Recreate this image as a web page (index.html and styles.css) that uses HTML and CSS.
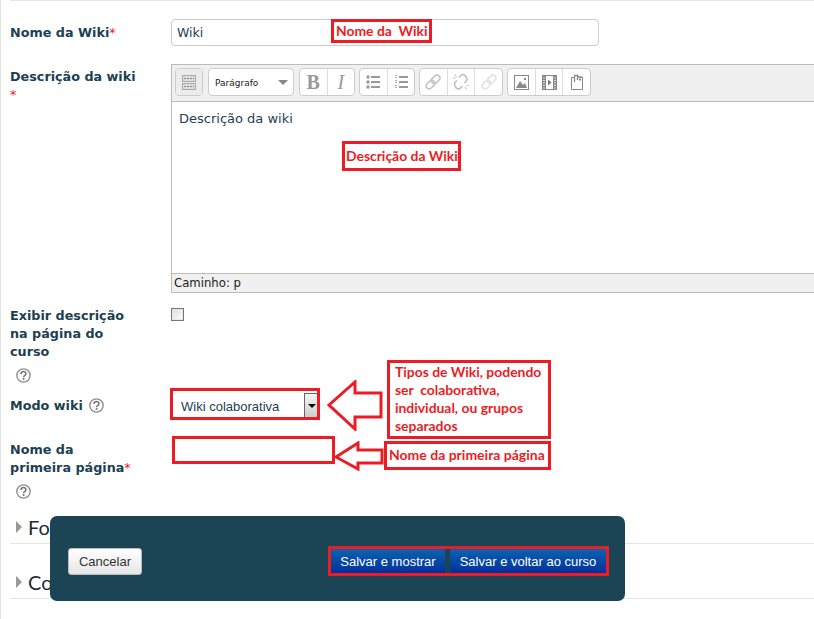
FILE: index.html
```html
<!DOCTYPE html>
<html lang="pt">
<head>
<meta charset="utf-8">
<title>Wiki</title>
<link rel="stylesheet" href="styles.css">
</head>
<body>
<svg class="defs" width="0" height="0" aria-hidden="true">
  <symbol id="help" viewBox="0 0 14 14">
    <circle cx="7" cy="7" r="6.200" fill="#fff" stroke="#8f8f8f" stroke-width="1.300"/>
    <path d="M4.700 5.600c0-3 4.600-3 4.600-.2 0 1.700-2.300 1.600-2.300 3.200" fill="none" stroke="#777" stroke-width="1.500"/>
    <rect x="6.200" y="9.400" width="1.700" height="1.700" fill="#777"/>
  </symbol>
  <symbol id="link" viewBox="0 0 18 18">
    <g fill="none" stroke="currentColor" stroke-width="1.700" transform="rotate(-45 9 9)">
      <rect x="0.500" y="6" width="9.500" height="6" rx="3"/>
      <rect x="8" y="6" width="9.500" height="6" rx="3"/>
    </g>
  </symbol>
</svg>
<main class="page">
  <form class="form">
    <div class="row row-name">
      <label class="label">Nome da Wiki<span class="req">*</span></label>
      <div class="control"><input class="text name-input" type="text" value="Wiki"></div>
    </div>
    <div class="row row-desc">
      <label class="label">Descrição da wiki <span class="req block">*</span></label>
      <div class="control">
        <div class="editor">
          <div class="toolbar">
            <span class="group group-1"><span class="tool single">
              <svg width="14" height="15" viewBox="0 0 14 15"><g fill="#ddd" stroke="#aaa"><rect x=".5" y=".5" width="13" height="6"/><rect x=".5" y="8.500" width="13" height="6"/></g><path d="M2 3.500h10M2 11.500h10" stroke="#888" stroke-dasharray="2 1"/></svg>
            </span></span>
            <span class="format">Parágrafo<i class="caret"></i></span>
            <span class="group group-2">
              <span class="tool serif-b">B</span><span class="tool serif-i">I</span>
            </span>
            <span class="group group-2">
              <span class="tool"><svg width="14" height="14" viewBox="0 0 14 14"><g fill="#999"><circle cx="2" cy="2" r="1.700"/><circle cx="2" cy="7" r="1.700"/><circle cx="2" cy="12" r="1.700"/><rect x="5" y="1" width="9" height="2"/><rect x="5" y="6" width="9" height="2"/><rect x="5" y="11" width="9" height="2"/></g></svg></span>
              <span class="tool"><svg width="14" height="14" viewBox="0 0 14 14"><g fill="#aaa"><rect x="1" y="0" width="2" height="1"/><rect x="1" y="2" width="2" height="1"/><rect x="1" y="5" width="2" height="1"/><rect x="1" y="7" width="2" height="1"/><rect x="1" y="10" width="2" height="1"/><rect x="1" y="12" width="2" height="1"/></g><g fill="#999"><rect x="5" y="1" width="9" height="2"/><rect x="5" y="6" width="9" height="2"/><rect x="5" y="11" width="9" height="2"/></g></svg></span>
            </span>
            <span class="group group-3">
              <span class="tool"><svg class="off-1" width="18" height="18"><use href="#link"/></svg></span>
              <span class="tool"><svg class="off-1" width="18" height="18" viewBox="0 0 18 18"><g fill="none" stroke="currentColor" stroke-width="1.700"><path d="M7 4.500l1.500-1.500a3 3 0 0 1 5.500 1 3 3 0 0 1 0 4.500L12.500 10M10.500 13l-1.500 1.500a3 3 0 0 1-5.500-1 3 3 0 0 1 0-4.500L5 7.500"/><path d="M3 1.500l1.500 2.500M14.500 16.500L13 14M1 5h2.500M17 12.500h-2.500" stroke-width="1.100"/></g></svg></span>
              <span class="tool"><svg class="off-2" width="18" height="18"><use href="#link"/></svg></span>
            </span>
            <span class="group group-3">
              <span class="tool"><svg width="15" height="15" viewBox="0 0 15 15"><rect x=".5" y=".5" width="14" height="14" fill="#fff" stroke="#888"/><path d="M2 13l4-7 3 4 2-2 2 5z" fill="#888"/><rect x="10" y="3" width="2" height="2" fill="#888"/></svg></span>
              <span class="tool"><svg width="15" height="15" viewBox="0 0 15 15"><rect x=".5" y=".5" width="14" height="14" fill="#ddd" stroke="#888"/><path d="M2 1v13M13 1v13" stroke="#888" stroke-width="2" stroke-dasharray="1.500 1"/><rect x="3.500" y=".5" width="8" height="14" fill="#fff" stroke="#888"/><path d="M6 4.500l3.500 3-3.500 3z" fill="#777"/></svg></span>
              <span class="tool"><svg width="14" height="16" viewBox="0 0 14 16"><path d="M1.500 3.500v12h11v-12h-2.500M4 3.500H1.500" fill="#fff" stroke="#888"/><path d="M4.500 8V1.500h3V6M7.500 2.500l5 1" fill="none" stroke="#888" stroke-width="1.300"/><rect x="9" y="4.500" width="2" height="2" fill="#888"/></svg></span>
            </span>
          </div>
          <div class="edit-area">Descrição da wiki</div>
          <div class="status">Caminho: p</div>
        </div>
      </div>
    </div>
    <div class="row row-show">
      <label class="label">Exibir descrição<br>na página do<br>curso<svg class="help help-block"><use href="#help"/></svg></label>
      <div class="control"><input class="check" type="checkbox"></div>
    </div>
    <div class="row row-mode">
      <label class="label">Modo wiki<svg class="help help-inline"><use href="#help"/></svg></label>
      <div class="control">
        <div class="select">Wiki colaborativa<span class="select-btn"><i class="select-caret"></i></span></div>
      </div>
    </div>
    <div class="row row-first">
      <label class="label">Nome da<br>primeira página<span class="req">*</span><svg class="help help-block"><use href="#help"/></svg></label>
      <div class="control"></div>
    </div>
    <section class="fold"><i class="fold-arrow"></i>Fo</section>
    <section class="fold fold-next"><i class="fold-arrow"></i>Co</section>
  </form>
</main>

<div class="note note-name">Nome da&nbsp; Wiki</div>
<div class="note note-desc">Descrição da Wiki</div>
<div class="note-outline select-outline"></div>
<div class="note-outline first-outline"></div>
<div class="note note-types">Tipos de Wiki, podendo ser&nbsp; colaborativa, individual, ou grupos separados</div>
<div class="note note-first">Nome da primeira página</div>
<svg class="arrow arrow-types" width="56" height="51" viewBox="0 0 56 51"><path d="M2 25 28 2v11h26v24H28v12z" fill="#fff" stroke="#ed1c24" stroke-width="3"/></svg>
<svg class="arrow arrow-first" width="50" height="30" viewBox="0 0 50 30"><path d="M2 16 24 2v7h24v13H24v6z" fill="#fff" stroke="#ed1c24" stroke-width="3"/></svg>

<div class="action-bar">
  <button class="btn" type="button">Cancelar</button>
  <div class="primary-actions">
    <button class="btn-primary first" type="button">Salvar e mostrar</button>
    <button class="btn-primary" type="button">Salvar e voltar ao curso</button>
  </div>
</div>
</body>
</html>
```

FILE: styles.css
```css
html, body {
  margin: 0;
  height: 619px;
  overflow: hidden;
  background: #fff;
}
body {
  position: relative;
  font-family: "DejaVu Sans", sans-serif;
  color: #1c3f52;
}
.defs { position: absolute; }
.page {
  height: 619px;
  border-left: 1px solid #e3e3e3;
  padding-left: 9px;
}
.form {
  border-top: 1px solid #e5e5e5;
  padding-top: 18px;
}
.row {
  display: grid;
  grid-template-columns: 161px 1fr;
}
.label {
  font-size: 12.75px;
  line-height: 18px;
  font-weight: 700;
  color: #1c3f52;
}
.req { color: #ed1c24; font-weight: 400; }
.req.block { display: block; }
.row-name { height: 27px; margin-bottom: 18px; align-items: center; }
.row-desc { height: 229px; margin-bottom: 14px; }
.row-desc .label { padding-top: 4px; }
.row-show { height: 80px; margin-bottom: 6px; }
.row-show .check { margin: 1px 0 0; }
.row-mode { height: 26px; margin-bottom: 16px; align-items: center; }
.row-first { height: 76px; }
.row-first .label { padding-top: 6px; }
.control { min-width: 0; }
.text {
  box-sizing: border-box;
  display: block;
  width: 428px;
  height: 27px;
  padding: 0 5px;
  border: 1px solid #ccc;
  border-radius: 4px;
  font: 12.5px "DejaVu Sans", sans-serif;
  color: #1c3f52;
}
.check {
  display: block;
  width: 13px;
  height: 13px;
  appearance: none;
  border: 1px solid #777;
  box-shadow: inset 0 0 0 1px #e6e6e6;
  background: linear-gradient(135deg, #ddd, #fff);
}
.help { width: 15px; height: 15px; }
.help-inline { margin-left: 6px; vertical-align: -3px; }
.help-block { display: block; margin: 7px 0 0 6px; }

.editor {
  width: 760px;
  height: 229px;
  box-sizing: border-box;
  border: 1px solid #bbb;
  display: flex;
  flex-direction: column;
}
.toolbar {
  height: 37px;
  box-sizing: border-box;
  background: #f0f0f0;
  border-bottom: 1px solid #bbb;
  padding: 3px 0 0 3px;
  display: flex;
  gap: 4px;
}
.group {
  display: flex;
  height: 28px;
  box-sizing: border-box;
  background: #fff;
  border: 1px solid #ccc;
  border-radius: 4px;
}
.group-1 { width: 28px; }
.group-2 { width: 56px; }
.group-3 { width: 84px; }
.tool {
  flex: 1;
  box-sizing: border-box;
  display: flex;
  align-items: center;
  justify-content: center;
  border-left: 1px solid #ddd;
  color: #999;
}
.tool:first-child { border-left: 0; }
.tool.single {
  background: #ececec;
  border-radius: 3px;
}
.serif-b, .serif-i {
  font: 700 20px "Liberation Serif", serif;
  color: #999;
}
.serif-i { font-style: italic; font-weight: 400; }
.off-1 { color: #c4c4c4; }
.off-2 { color: #e4e4e4; }
.format {
  box-sizing: border-box;
  width: 86px;
  height: 28px;
  margin: 0 1px;
  background: #fff;
  border: 1px solid #ccc;
  border-radius: 4px;
  padding: 2px 0 0 6px;
  display: flex;
  align-items: center;
  position: relative;
  font: 9px "DejaVu Sans", sans-serif;
  color: #222;
}
.caret {
  position: absolute;
  right: 5px;
  top: 11px;
  border-left: 5px solid transparent;
  border-right: 5px solid transparent;
  border-top: 5px solid #888;
}
.edit-area {
  flex: 1;
  padding: 9px 7px;
  font-size: 13px;
  line-height: 16px;
  color: #1c3f52;
  background: #fff;
}
.status {
  height: 19px;
  box-sizing: border-box;
  border-top: 1px solid #bbb;
  background: #f0f0f0;
  padding: 2px 2px;
  font-size: 11.7px;
  line-height: 15px;
  color: #222;
}
.select {
  box-sizing: border-box;
  width: 148px;
  height: 26px;
  padding-left: 10px;
  display: flex;
  align-items: center;
  justify-content: space-between;
  font: 13px "Liberation Sans", sans-serif;
  color: #1c3f52;
}
.select-btn {
  box-sizing: border-box;
  width: 15px;
  height: 26px;
  background: linear-gradient(#f4f4f4, #ccc);
  border: 1px solid #666;
  display: flex;
  align-items: center;
  justify-content: center;
}
.select-caret {
  border-left: 4px solid transparent;
  border-right: 4px solid transparent;
  border-top: 4px solid #000;
}
.fold {
  height: 33px;
  box-sizing: border-box;
  border-bottom: 1px solid #e5e5e5;
  font: 20px/32px Lato, sans-serif;
  color: #1c2b33;
  padding-left: 18px;
  position: relative;
  white-space: nowrap;
}
.fold-next { margin-top: 22px; }
.fold-arrow {
  position: absolute;
  left: 6px;
  top: 10px;
  border-top: 6px solid transparent;
  border-bottom: 6px solid transparent;
  border-left: 6px solid #999;
}

/* Annotations painted over the form */
.note, .note-outline {
  position: absolute;
  box-sizing: border-box;
  border: 3px solid #ed1c24;
}
.note {
  color: #ed1c24;
  font: 700 13.9px/18px Lato, sans-serif;
  background: #fff;
  white-space: nowrap;
}
.note-name { left: 331px; top: 19px; width: 101px; height: 24px; padding: 0 0 0 2px; }
.note-desc { left: 342px; top: 141px; width: 119px; height: 30px; padding: 3px 0 0 1px; }
.note-types {
  left: 387px; top: 360px; width: 164px; height: 79px;
  padding: 0 0 0 5px; white-space: normal;
}
.note-first { left: 384px; top: 441px; width: 167px; height: 29px; padding: 2px 0 0 2px; font-size: 14px; }
.select-outline { left: 170px; top: 388px; width: 150px; height: 32px; }
.first-outline { left: 172px; top: 436px; width: 163px; height: 28px; }
.arrow { position: absolute; }
.arrow-types { left: 327px; top: 380px; }
.arrow-first { left: 334px; top: 441px; }

.action-bar {
  position: absolute;
  left: 50px;
  top: 516px;
  width: 575px;
  height: 85px;
  box-sizing: border-box;
  background: #1b4555;
  border-radius: 7px;
  padding: 5px 16px 0 18px;
  display: flex;
  align-items: center;
  justify-content: space-between;
}
.btn {
  width: 74px;
  height: 27px;
  padding: 0;
  border: 1px solid #bbb;
  border-radius: 3px;
  background: linear-gradient(#fff, #e6e6e6);
  font: 13px "Liberation Sans", sans-serif;
  color: #333;
}
.primary-actions {
  display: flex;
  gap: 5px;
  border: 3px solid #ed1c24;
}
.btn-primary {
  height: 24px;
  padding: 0;
  width: 156px;
  border: 0;
  background: linear-gradient(#0a63b0, #04309c);
  font: 13px "Liberation Sans", sans-serif;
  color: #fff;
}
.btn-primary.first { width: 114px; }
```
